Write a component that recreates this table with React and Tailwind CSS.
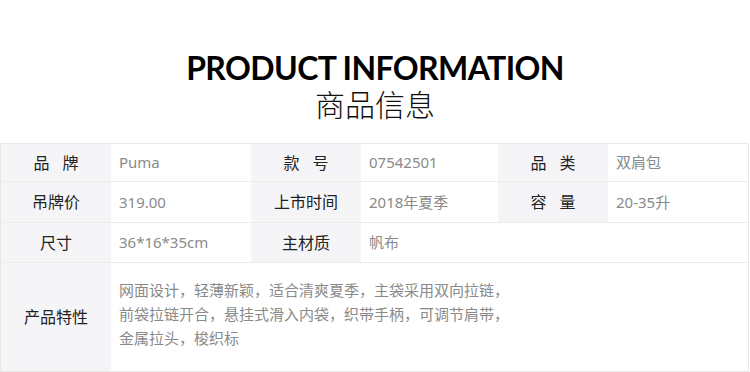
import React from 'react';

const cjk = { fontFamily: '"Noto Sans", "Noto Sans CJK SC", sans-serif' };

const Label = ({ children, className = '' }) => (
  <div className={`flex items-center justify-center bg-[#f5f5f8] text-[16px] text-[#222] ${className}`}>
    {children}
  </div>
);

const Value = ({ children, className = '' }) => (
  <div className={`flex items-center bg-white pl-2 text-[15px] text-[#8a8a8a] ${className}`}>
    {children}
  </div>
);

const Spaced = ({ a, b }) => (
  <span>
    {a}
    <span className="inline-block w-[13px]" />
    {b}
  </span>
);

const features = [
  '网面设计，轻薄新颖，适合清爽夏季，主袋采用双向拉链，',
  '前袋拉链开合，悬挂式滑入内袋，织带手柄，可调节肩带，',
  '金属拉头，梭织标',
];

export default function App() {
  return (
    <div className="w-[750px] h-[372px] bg-white overflow-hidden" style={cjk}>
      {/* Heading */}
      <div className="flex flex-col items-center pt-[50px] h-[143px]">
        <h1
          className="text-[32px] leading-[36px] font-bold tracking-[-0.6px] text-black"
          style={{ fontFamily: 'Lato, "Liberation Sans", sans-serif' }}
        >
          PRODUCT INFORMATION
        </h1>
        <h2 className="mt-[1px] text-[30px] leading-[36px] font-light text-[#111]">商品信息</h2>
      </div>

      {/* Table */}
      <div className="w-[749px] border-t border-l border-r border-[#e8e8e8]">
        <div className="flex h-[38px] border-b border-[#ececec]">
          <Label className="w-[110px]"><Spaced a="品" b="牌" /></Label>
          <Value className="w-[140px]">Puma</Value>
          <Label className="w-[110px]"><Spaced a="款" b="号" /></Label>
          <Value className="w-[137px]">07542501</Value>
          <Label className="w-[110px]"><Spaced a="品" b="类" /></Label>
          <Value className="flex-1">双肩包</Value>
        </div>
        <div className="flex h-[41px] border-b border-[#ececec]">
          <Label className="w-[110px]">吊牌价</Label>
          <Value className="w-[140px]">319.00</Value>
          <Label className="w-[110px]">上市时间</Label>
          <Value className="w-[137px]">2018年夏季</Value>
          <Label className="w-[110px]"><Spaced a="容" b="量" /></Label>
          <Value className="flex-1">20-35升</Value>
        </div>
        <div className="flex h-[40px] border-b border-[#ececec]">
          <Label className="w-[110px]">尺寸</Label>
          <Value className="w-[140px]">36*16*35cm</Value>
          <Label className="w-[110px]">主材质</Label>
          <Value className="flex-1">帆布</Value>
        </div>
        <div className="flex h-[109px] border-b border-[#e8e8e8]">
          <Label className="w-[110px]">产品特性</Label>
          <div className="flex-1 bg-white pl-2 pt-[15px] text-[15px] leading-[24px] text-[#8a8a8a]">
            {features.map((line) => (
              <div key={line} className="whitespace-nowrap">{line}</div>
            ))}
          </div>
        </div>
      </div>
    </div>
  );
}
